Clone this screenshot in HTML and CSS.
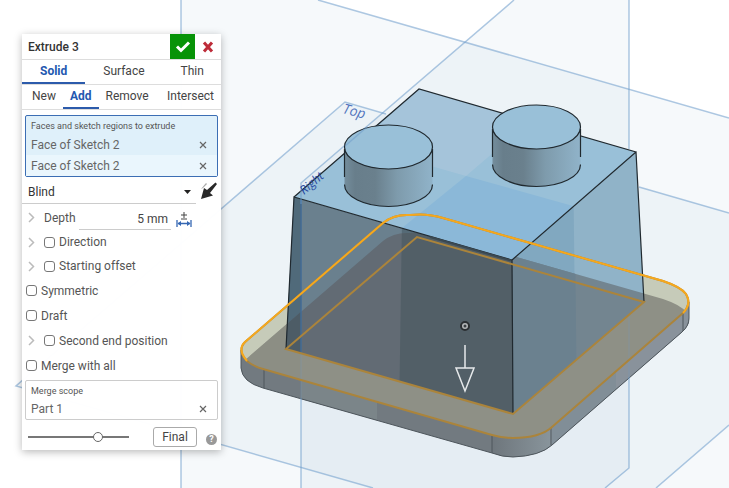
FILE: index.html
```html
<!DOCTYPE html>
<html lang="en">
<head>
<meta charset="utf-8">
<meta name="viewport" content="width=device-width, initial-scale=1">
<title>Extrude 3</title>
<link rel="stylesheet" href="styles.css">
</head>
<body>
<main class="workspace">
  <svg class="scene" viewBox="0 0 729 488" preserveAspectRatio="xMinYMin slice" role="img" aria-label="Model view">
    <defs>
      <linearGradient id="cyl" x1="0" x2="1" y1="0" y2="0">
        <stop offset="0" stop-color="#748d9c"/>
        <stop offset=".12" stop-color="#687e8b"/>
        <stop offset=".35" stop-color="#6a808d"/>
        <stop offset=".6" stop-color="#7e9bac"/>
        <stop offset="1" stop-color="#90b3c9"/>
      </linearGradient>
      <linearGradient id="corner" x1="0" x2="1" y1="0" y2="0">
        <stop offset="0" stop-color="#6e767c"/>
        <stop offset="1" stop-color="#89959c"/>
      </linearGradient>
      <path id="plate" d="M245 342 L383 223 Q394 214 410 215 Q427 213 443 218 L663 281 Q681 287 686 294 Q692 304 683 313 L552 427 Q540 438 513 438 Q502 438 492 435 L263 369 Q246 364 242 354 Q240 347 245 342Z"/>
      <clipPath id="plate-clip"><use href="#plate"/></clipPath>
      <clipPath id="shadow-clip"><use href="#plate" y="18"/></clipPath>
      <clipPath id="front-clip"><path d="M294 197 L512 260 L513 414 L286 349Z"/></clipPath>
      <clipPath id="right-clip"><path d="M512 260 L636 152 L644 302 L513 414Z"/></clipPath>
    </defs>

    <!-- reference planes -->
    <g class="plane">
      <path d="M181 -39 L729 118 V520 H181Z"/>
      <path d="M345 102 L760 222 V398 L656 488 L600 537 L373 488 L16 386Z"/>
      <path d="M301 183 L514 0 L629 -99 V468 L540 545 H301Z"/>
    </g>

    <!-- base plate sides -->
    <path fill="#727a80" d="M241 350 V368 Q242 382 263 388 L492 453 Q502 457 513 457 Q540 456 552 445 L682 332 Q690 325 689 318 V302 L552 427 L492 435 L263 369Z"/>
    <path fill="#7b8589" d="M301 380 L377 402 V420 L301 399Z"/>
    <path fill="url(#corner)" d="M492 430 V453 Q502 457 513 457 Q540 456 552 445 V420Z"/>
    <path fill="#818e97" d="M552 422 V445 L682 332 Q690 325 689 318 V300Z"/>
    <path fill="#89929b" d="M616 371 V389 L682 332 Q690 325 689 318 V300Z"/>
    <path class="plate-edge" d="M241 350 V368 Q242 382 263 388 L492 453 Q502 457 513 457 Q540 456 552 445 L682 332 Q689 326 689 318 V302 M264 370 V388 M492 436 V453 M551 428 V445 M683 313 V331"/>

    <!-- preview of the extruded plate -->
    <use href="#plate" fill="#c6cbb9"/>
    <g clip-path="url(#plate-clip)">
      <use href="#plate" y="18" fill="#8e9086"/>
      <path fill="#898c82" d="M250 300 H301 V410 H250Z" clip-path="url(#shadow-clip)" opacity=".5"/>
    </g>

    <!-- right face -->
    <path fill="#90b3c8" d="M512 260 L636 152 L644 302 L513 414Z"/>
    <g clip-path="url(#right-clip)">
      <path fill="#81a8c0" d="M500 140 H573 L576 420 H500Z"/>
      <use href="#plate" y="18" fill="#738590"/>
      <path fill="#6b818f" d="M500 140 H574 L577 420 H500Z" clip-path="url(#shadow-clip)"/>
    </g>

    <!-- front face -->
    <path fill="#6a808e" d="M294 197 L512 260 L513 414 L286 349Z"/>
    <g clip-path="url(#front-clip)">
      <path fill="#506a7a" d="M280 190 H301 V360 H280Z"/>
      <path fill="#556a76" d="M402 220 H520 V420 H399Z"/>
      <use href="#plate" y="18" fill="#626b74"/>
      <path fill="#525f67" d="M402 220 H520 V420 H399Z" clip-path="url(#shadow-clip)"/>
      <path fill="#4d5c66" d="M280 190 H301 V360 H280Z" clip-path="url(#shadow-clip)"/>
      <path stroke="#426b96" stroke-width="1.5" d="M301 190 V360"/>
    </g>

    <!-- top face -->
    <path fill="#99c0d8" d="M419 89 L636 152 L512 260 L294 197Z"/>
    <path fill="#a5c4da" d="M419 89 L530 121 L466 176 L357 145Z"/>
    <path fill="#8bb8d8" d="M466 176 L573 206 L512 260 L402 228Z"/>
    <path class="edge" d="M294 197 L419 89 L636 152 L512 260 L294 197 L286 349 M512 260 L513 414 M636 152 L644 302"/>
    <path stroke="#3b4952" stroke-width="2" d="M430 237 L511 260.5"/>

    <!-- plane outlines -->
    <g class="plane-line">
      <path d="M181 0 V488 M318 0 L729 118"/>
      <path d="M386 114 L345 102 L16 386 L373 488 M639 187 L729 213 M656 488 L729 425"/>
      <path d="M301 204 V183 L514 0 M301 398 V488 M629 0 V149 M629 377 V468 L605 488"/>
      <path opacity=".35" d="M301 352 V398 M629 316 V377"/>
    </g>

    <!-- studs -->
    <g id="stud">
      <path fill="url(#cyl)" d="M344.5 147 V184.5 A44 22 0 0 0 432.5 184.5 V147Z"/>
      <ellipse fill="#99c0d8" class="edge-line" cx="388.5" cy="147" rx="44" ry="22"/>
      <path class="edge" d="M344.5 149 V177 M432.5 149 V177 M344.5 184.5 A44 22 0 0 0 432.5 184.5"/>
    </g>
    <use href="#stud" x="148" y="-20"/>
    <path stroke="#6d9bca" stroke-width="1.5" opacity=".5" d="M345 146 L367 127"/>

    <!-- sketch outlines -->
    <use href="#plate" class="sketch-dim"/>
    <path class="sketch-dim" d="M286 349 L417 237 L644 302 L513 414Z"/>
    <path class="sketch" d="M247 361 Q237 349 245 342 L383 223 Q394 214 410 215 Q427 213 443 218 L663 281 Q681 287 686 294 Q692 304 683 313"/>

    <!-- drag handle -->
    <circle cx="465" cy="326" r="4" fill="#b4b7b9" stroke="#2b2f32" stroke-width="2"/>
    <circle cx="465" cy="326" r="1.5" fill="#3a3f42"/>
    <path class="handle" d="M465 345 V368 M456 368 H474 L465 391Z"/>

    <text class="plane-name" transform="translate(342 113) rotate(15)">Top</text>
    <text class="plane-name plane-name-dark" transform="translate(304 195) rotate(-41)">Right</text>
  </svg>

  <form class="panel">
    <header class="panel-head">
      <h1 class="title">Extrude 3</h1>
      <button type="button" class="accept" aria-label="Accept"><svg width="16" height="14" viewBox="0 0 16 14"><path d="M2 6.500 L6 10.500 L14 2.500" fill="none" stroke="#fff" stroke-width="3"/></svg></button>
      <button type="button" class="cancel" aria-label="Cancel"><svg width="12" height="12" viewBox="0 0 12 12"><path d="M2 1.500 L10 10.500 M10 1.500 L2 10.500" stroke="#bd2c39" stroke-width="3"/></svg></button>
    </header>
    <nav class="tabs tabs-kind">
      <button type="button" class="tab active">Solid</button>
      <button type="button" class="tab">Surface</button>
      <button type="button" class="tab">Thin</button>
    </nav>
    <nav class="tabs tabs-mode">
      <button type="button" class="tab">New</button>
      <button type="button" class="tab active">Add</button>
      <button type="button" class="tab">Remove</button>
      <button type="button" class="tab">Intersect</button>
    </nav>

    <section class="picks picks-active">
      <h2 class="caption">Faces and sketch regions to extrude</h2>
      <ul class="pick-list">
        <li class="pick">Face of Sketch 2<button type="button" class="remove" aria-label="Remove"><svg width="8" height="8" viewBox="0 0 8 8"><path d="M1 1 L7 7 M7 1 L1 7"/></svg></button></li>
        <li class="pick pick-light">Face of Sketch 2<button type="button" class="remove" aria-label="Remove"><svg width="8" height="8" viewBox="0 0 8 8"><path d="M1 1 L7 7 M7 1 L1 7"/></svg></button></li>
      </ul>
    </section>

    <div class="end-type">
      <div class="select-wrap">
        <select class="select" aria-label="End type"><option>Blind</option></select>
        <svg class="caret" width="7" height="4" viewBox="0 0 7 4"><path d="M0 0 H7 L3.500 4Z" fill="#222"/></svg>
      </div>
      <button type="button" class="flip" aria-label="Opposite direction"><svg width="18" height="18" viewBox="0 0 18 18"><path d="M1 7 L6 1 L7 2 L3 6Z" fill="#aaa"/><path d="M1 17 L4 6 L7 8 L15.500 .5 L17 2 L10 11 L13 13.500Z" fill="#292929"/></svg></button>
    </div>

    <div class="depth">
      <svg class="chevron" width="7" height="11" viewBox="0 0 7 11"><path d="M1 1 L5.500 5.500 L1 10"/></svg>
      <label class="depth-label" for="depth">Depth</label>
      <input class="depth-input" id="depth" type="text" value="5 mm">
      <svg class="measure" width="16" height="15" viewBox="0 0 16 15"><path d="M5 3 H11 M8 0 V6 M5 7 H11" stroke="#444" stroke-width="1"/><path d="M1 8 V15 M15 8 V15 M2 11.500 H14" stroke="#3567b3" stroke-width="1.300"/><path d="M1.500 11.500 L5 9 V14Z M14.500 11.500 L11 9 V14Z" fill="#3567b3"/></svg>
    </div>
    <div class="option"><svg class="chevron" width="7" height="11" viewBox="0 0 7 11"><path d="M1 1 L5.500 5.500 L1 10"/></svg><label class="check"><input type="checkbox">Direction</label></div>
    <div class="option"><svg class="chevron" width="7" height="11" viewBox="0 0 7 11"><path d="M1 1 L5.500 5.500 L1 10"/></svg><label class="check"><input type="checkbox">Starting offset</label></div>
    <div class="option option-tall"><label class="check"><input type="checkbox">Symmetric</label></div>
    <div class="option option-tall"><label class="check"><input type="checkbox">Draft</label></div>
    <div class="option option-tall"><svg class="chevron" width="7" height="11" viewBox="0 0 7 11"><path d="M1 1 L5.500 5.500 L1 10"/></svg><label class="check"><input type="checkbox">Second end position</label></div>
    <div class="option option-tall"><label class="check"><input type="checkbox">Merge with all</label></div>

    <section class="picks picks-scope">
      <h2 class="caption">Merge scope</h2>
      <ul class="pick-list">
        <li class="pick">Part 1<button type="button" class="remove" aria-label="Remove"><svg width="8" height="8" viewBox="0 0 8 8"><path d="M1 1 L7 7 M7 1 L1 7"/></svg></button></li>
      </ul>
    </section>

    <footer class="panel-foot">
      <input class="slider" type="range" min="0" max="100" value="71" aria-label="Preview opacity">
      <button type="button" class="final">Final</button>
      <button type="button" class="help" aria-label="Help">?</button>
    </footer>
  </form>
</main>
</body>
</html>
```
FILE: styles.css
```css
* { box-sizing: border-box; }

body {
  margin: 0;
  background: #fff;
  color: #555;
  font-family: Roboto, "Liberation Sans", sans-serif;
  font-size: 12px;
}

button, input, select {
  margin: 0;
  padding: 0;
  border: 0;
  background: none;
  color: inherit;
  font: inherit;
}

h1, h2, ul { margin: 0; padding: 0; font-weight: 400; list-style: none; }

.workspace {
  position: relative;
  min-height: 100vh;
  padding: 34px 22px;
  overflow: hidden;
}

/* model view */
.scene { position: absolute; inset: 0; width: 100%; height: 100%; }
.plane { fill: rgba(100, 150, 180, .06); }
.plane-line { fill: none; stroke: #6c9acb; stroke-opacity: .55; stroke-width: 1.5; }
.edge { fill: none; stroke: #20292f; stroke-width: 1.2; }
.edge-line { stroke: #20292f; stroke-width: 1.2; }
.plate-edge { fill: none; stroke: #4e565c; stroke-width: 1; }
.sketch { fill: none; stroke: #f5a81e; stroke-width: 2; }
.sketch-dim { fill: none; stroke: #ab843b; stroke-width: 2; }
.handle { fill: none; stroke: #e6e9eb; stroke-width: 1.5; }
.plane-name { fill: #5273bd; font-family: "Open Sans", sans-serif; font-size: 14px; font-style: italic; }
.plane-name-dark { fill: #2446a0; font-size: 12px; }

/* feature panel */
.panel {
  position: relative;
  width: 199px;
  background: rgba(255, 255, 255, .98);
  box-shadow: 0 2px 8px rgba(0, 0, 0, .28);
}

.panel-head { display: flex; height: 26px; border-bottom: 1px solid #ddd; }
.title { flex: 1; padding-left: 6px; color: #333; font-size: 12px; font-weight: 500; line-height: 26px; }
.accept, .cancel { display: grid; place-items: center; width: 25px; height: 25px; }
.accept { background: #079307; }
.cancel { margin-right: 1px; }

.tabs { display: flex; border-bottom: 1px solid #ddd; }
.tab { height: 24px; border-bottom: 2px solid transparent; color: #444; }
.tabs-kind .tab { padding: 0 18px; }
.tabs-mode .tab { padding: 0 7px; }
.tabs-mode .tab:first-child { padding-left: 10px; }
.tabs-mode .tab:last-child { margin-left: auto; }
.tabs .active { border-color: #2c5bab; color: #2458b0; font-weight: 700; }

.picks { margin: 0 3px; border: 1px solid #ccc; border-radius: 2px; }
.picks-active { margin-top: 5px; border-color: #3c6eb4; background: #dff0fa; }
.caption { padding: 2px 5px 0; font-size: 9px; line-height: 16px; }
.pick { display: flex; align-items: center; justify-content: space-between; height: 20px; padding: 0 10px 0 5px; color: #666; }
.picks-active .pick { height: 21px; }
.pick-light { background: #eaf6fd; }
.remove { display: grid; width: 8px; height: 8px; }
.remove svg { fill: none; stroke: #666; stroke-width: 1.2; }

.end-type { display: flex; align-items: center; height: 27px; }
.select-wrap { position: relative; flex: 1; height: 27px; border-bottom: 1px solid #ccc; }
.select { width: 100%; height: 26px; padding: 4px 0 0 6px; appearance: none; color: #333; }
.caret { position: absolute; right: 5px; bottom: 9px; pointer-events: none; }
.flip { display: grid; margin: 0 3px 0 4px; }

.depth { display: flex; align-items: center; height: 26px; padding: 0 50px 0 6px; position: relative; }
.chevron { flex: none; fill: none; stroke: #bbb; stroke-width: 1.5; }
.depth-label { margin: 2px 3px 0 9px; }
.depth-input { flex: 1; min-width: 0; height: 22px; margin-top: 4px; padding-right: 3px; border-bottom: 1px solid #ccc; color: #444; text-align: right; }
.measure { position: absolute; right: 29px; top: 8px; fill: none; }

.option { display: flex; align-items: center; height: 24px; padding-left: 4px; }
.option-tall { height: 25px; }
.option .chevron { margin: 0 9px 0 2px; }
.check { display: flex; align-items: center; gap: 4px; }
.check input { appearance: none; width: 11px; height: 11px; border: 1px solid #777; border-radius: 3px; background: #fff; }

.picks-scope { margin-top: 2px; }

.panel-foot { display: flex; align-items: center; height: 30px; padding: 4px 4px 0 6px; }
.slider { flex: none; width: 101px; height: 12px; appearance: none; }
.slider::-webkit-slider-runnable-track { height: 2px; background: #777; }
.slider::-webkit-slider-thumb { appearance: none; width: 10px; height: 10px; margin-top: -4px; border: 1px solid #666; border-radius: 50%; background: #fff; }
.final { width: 44px; height: 20px; margin-left: auto; border: 1px solid #aaa; border-radius: 3px; background: #fff; color: #444; }
.help { width: 11px; height: 11px; margin: 4px 0 0 9px; border-radius: 50%; background: #999; color: #fff; font-size: 9px; font-weight: 700; line-height: 11px; }
```
